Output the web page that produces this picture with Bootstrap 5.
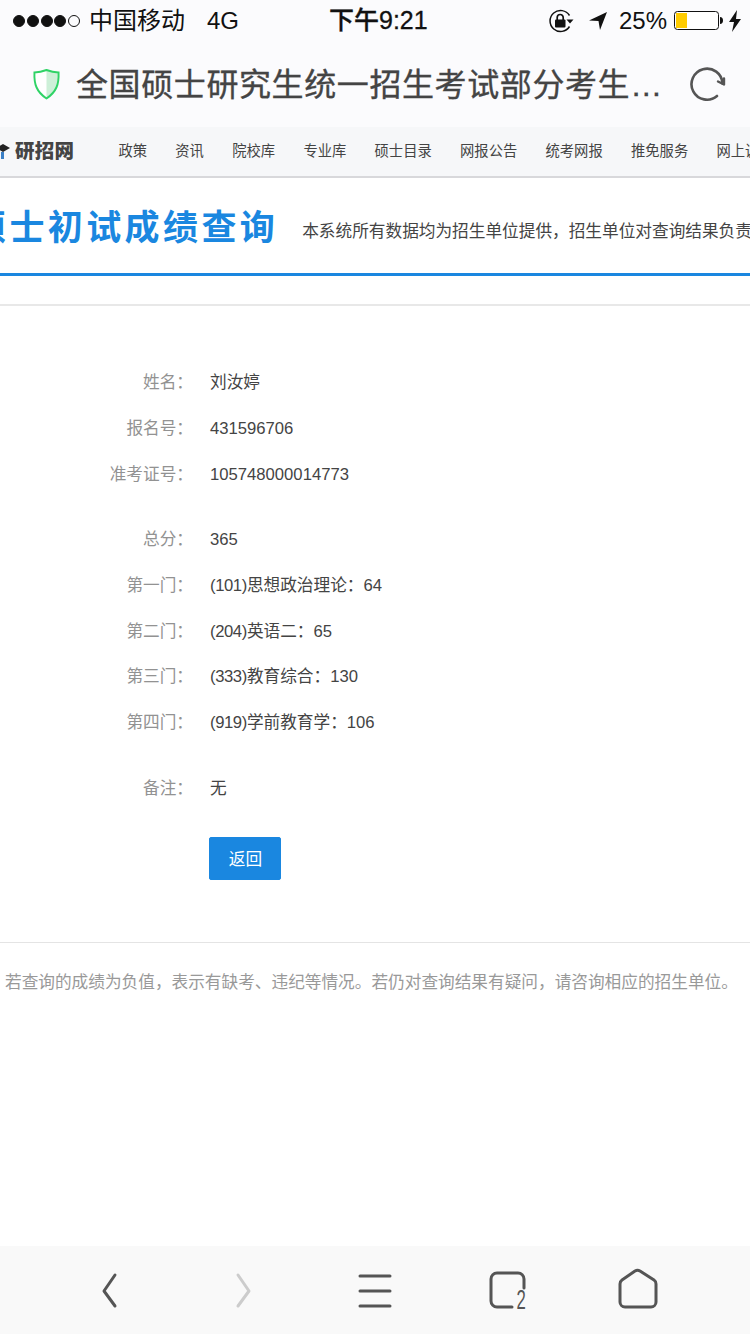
<!DOCTYPE html>
<html lang="zh-CN">
<head>
<meta charset="utf-8">
<title>硕士初试成绩查询</title>
<link href="https://cdn.jsdelivr.net/npm/bootstrap@5.3.0/dist/css/bootstrap.min.css" rel="stylesheet">
<style>
html,body{height:1334px;overflow:hidden;background:#fff}
body{font-family:"Liberation Sans","Noto Sans CJK SC",sans-serif;color:#333}
.shell{width:750px;height:1334px;overflow:hidden}
.chrome{height:127px;background:#fbfbfd;flex:none}
.statusline{height:40px;font-size:24px;line-height:36px;color:#111;padding:2px 8px 0 13px;white-space:nowrap}
.dots{gap:1.75px;margin-right:9px}
.dot{width:12px;height:12px;border-radius:50%;background:#111;border:1px solid #111}
.dot-empty{background:transparent}
.nettype{margin-left:22px}
.timetext{position:absolute;left:329px;top:2px;font-size:25px;font-weight:500;-webkit-text-stroke:.3px #111}
.gpsicon{margin-left:13px}
.pcttext{margin-left:11px}
.batt{margin-left:7px}
.urlline{height:87px;padding:0 23px 0 33px;gap:16px}
.urlline svg{flex-shrink:0}
.urltext{font-size:32px;letter-spacing:.6px;color:#444;white-space:nowrap;line-height:87px;padding-top:2px;width:600px;height:87px;overflow:hidden;-webkit-text-stroke:.35px #444}
.sitenav{height:51px;background:#f6f7f9;border-bottom:2px solid #d8d8db;white-space:nowrap;overflow:hidden;flex:none}
.sitenav > *{flex-shrink:0}
.brandname{font-weight:900;font-size:19.500px;color:#444;margin:0 44px 0 5px;line-height:1;letter-spacing:.3px}
.navitem{font-size:14.300px;color:#444;margin:1px 28.3px 0 0}
.headband{height:98px;padding-bottom:2px;border-bottom:3px solid #1a87e0;white-space:nowrap;overflow:hidden;flex:none}
.headtitle{font-size:35px;font-weight:700;color:#1a87e0;letter-spacing:3.4px;margin:0 24px 0 -29px;line-height:1;flex:none;font-family:"Noto Sans CJK SC",sans-serif}
.headnote{font-size:16.670px;color:#444;flex:none;margin-top:14px}
.rule-top{height:30px;border-bottom:2px solid #e8e8e8;flex:none}
.scoreblock{padding-top:54px;font-size:16.670px;flex:none}
.kv{height:45.67px;align-items:center}
.kv-gap{margin-top:20px}
.kv-label{width:193px;text-align:right;color:#929292;flex:none}
.kv-value{margin-left:17px;color:#444}
.subjcode{letter-spacing:-.4px}
.backbtn{margin:26px 0 0 209px;width:72px;height:43px;background:#1a87e0;border:1px solid #1a87e0;color:#fff;font-size:16.670px;border-radius:2px;padding:1px 0 0 1px;line-height:41px}
.noteblock{margin-top:62px;border-top:1px solid #e4e4e4;padding:28px 0 0 5px;font-size:16.670px;color:#999;line-height:24px;white-space:nowrap;flex:none}
.toolbar{height:88px;background:#f9f9f9;flex:none;position:relative}
.toolicon{position:absolute;top:0;left:0}
</style>
</head>
<body>
<div class="shell d-flex flex-column">
  <div class="chrome position-relative">
    <div class="statusline d-flex align-items-center">
      <span class="dots d-inline-flex"><i class="dot"></i><i class="dot"></i><i class="dot"></i><i class="dot"></i><i class="dot dot-empty"></i></span>
      <span>中国移动</span><span class="nettype">4G</span>
      <span class="timetext">下午9:21</span>
      <span class="ms-auto d-inline-flex align-items-center">
        <svg width="26" height="24" viewBox="0 0 26 24" fill="none"><path d="M20.5 6.500A10.500 10.500 0 1 0 20.500 17.500" stroke="#111" stroke-width="1.5"/><path d="M17.500 10.500h7l-3.500 4z" fill="#111"/><rect x="6" y="10.500" width="10.500" height="8" rx="1" fill="#111"/><path d="M8.200 11V8.500a3 3 0 0 1 6 0V11" stroke="#111" stroke-width="1.7"/></svg>
        <svg class="gpsicon" width="20" height="20" viewBox="0 0 20 20"><path d="M19 1 1 9.500 10.500 10 12 19z" fill="#111"/></svg>
        <span class="pcttext">25%</span>
        <svg class="batt" width="50" height="20" viewBox="0 0 50 20"><rect x=".5" y=".5" width="44" height="18" rx="3" fill="#fff" stroke="#111"/><rect x="2" y="2" width="11" height="15" fill="#fc0"/><path d="M46 6c2 0 3 1.500 3 3.500S48 13 46 13z" fill="#111"/></svg>
        <svg width="14" height="22" viewBox="0 0 14 22" class="ms-1"><path d="M9 0 1 12h5l-2 10 9-13H8z" fill="#111"/></svg>
      </span>
    </div>
    <div class="urlline d-flex align-items-center">
      <svg width="27" height="32" viewBox="0 0 28 32" fill="none"><path d="M14 1.500C19 3.500 22 4 26.500 4c.5 12-2 20-12.500 27C3.500 24 1 16 1.500 4 6 4 9 3.500 14 1.500z" fill="#fff"/><path d="M14 1.500C19 3.500 22 4 26.500 4c.5 12-2 20-12.500 27z" fill="#cdf0d8"/><path d="M14 1.500C19 3.500 22 4 26.500 4c.5 12-2 20-12.500 27C3.500 24 1 16 1.500 4 6 4 9 3.500 14 1.500z" stroke="#2fd366" stroke-width="2"/></svg>
      <div class="urltext">全国硕士研究生统一招生考试部分考生…</div>
      <svg class="ms-auto" width="38" height="38" viewBox="0 0 38 38" fill="none"><path d="M28 31A15.500 15.500 0 1 1 33.500 18.500" stroke="#555" stroke-width="2.600" stroke-linecap="round"/><path d="M29 16.500 35 19.500 35 13.500" stroke="#555" stroke-width="2.400" stroke-linecap="round" stroke-linejoin="round"/></svg>
    </div>
  </div>
  <nav class="sitenav d-flex align-items-center">
    <svg width="10" height="20" viewBox="0 0 10 20"><path d="M-4 6 3 2 10 6 3 10z" fill="#222"/><path d="M-2 9v6h2V9z" fill="#222"/><path d="M1 10v7h3v-7z" fill="#3a7fc5"/></svg>
    <span class="brandname">研招网</span>
    <span class="navitem">政策</span><span class="navitem">资讯</span><span class="navitem">院校库</span><span class="navitem">专业库</span><span class="navitem">硕士目录</span><span class="navitem">网报公告</span><span class="navitem">统考网报</span><span class="navitem">推免服务</span><span class="navitem">网上调剂</span>
  </nav>
  <header class="headband d-flex align-items-center">
    <span class="headtitle">硕士初试成绩查询</span>
    <span class="headnote">本系统所有数据均为招生单位提供，招生单位对查询结果负责</span>
  </header>
  <div class="rule-top"></div>
  <section class="scoreblock">
    <div class="kv d-flex"><span class="kv-label">姓名：</span><span class="kv-value">刘汝婷</span></div>
    <div class="kv d-flex"><span class="kv-label">报名号：</span><span class="kv-value">431596706</span></div>
    <div class="kv d-flex"><span class="kv-label">准考证号：</span><span class="kv-value">105748000014773</span></div>
    <div class="kv kv-gap d-flex"><span class="kv-label">总分：</span><span class="kv-value">365</span></div>
    <div class="kv d-flex"><span class="kv-label">第一门：</span><span class="kv-value"><span class="subjcode">(101)</span>思想政治理论：64</span></div>
    <div class="kv d-flex"><span class="kv-label">第二门：</span><span class="kv-value"><span class="subjcode">(204)</span>英语二：65</span></div>
    <div class="kv d-flex"><span class="kv-label">第三门：</span><span class="kv-value"><span class="subjcode">(333)</span>教育综合：130</span></div>
    <div class="kv d-flex"><span class="kv-label">第四门：</span><span class="kv-value"><span class="subjcode">(919)</span>学前教育学：106</span></div>
    <div class="kv kv-gap d-flex"><span class="kv-label">备注：</span><span class="kv-value">无</span></div>
    <button class="btn backbtn d-block" type="button">返回</button>
  </section>
  <div class="noteblock">若查询的成绩为负值，表示有缺考、违纪等情况。若仍对查询结果有疑问，请咨询相应的招生单位。</div>
  <div class="flex-grow-1"></div>
  <div class="toolbar">
    <svg class="toolicon" width="750" height="88" viewBox="0 0 750 88" fill="none" stroke="#555" stroke-width="3" stroke-linecap="round" stroke-linejoin="round">
      <path d="M115 29 104 45l11 15"/>
      <path d="M238 29l11 16-11 15" stroke="#ccc"/>
      <path d="M360 30h30M360 45h30M360 60h30"/>
      <path d="M512 61h-15a6 6 0 0 1-6-6V33a6 6 0 0 1 6-6h21a6 6 0 0 1 6 6v9"/>
      <path d="M620 38c0-2 .5-3 2-4l13-9c2-1.200 3-1.200 5 0l14 9c1.500 1 2 2 2 4v18a5 5 0 0 1-5 5h-26a5 5 0 0 1-5-5z"/>
      <text transform="translate(516.500 62.500) scale(.62 1)" font-family="Liberation Sans" font-size="27" fill="#555" stroke="none">2</text>
    </svg>
  </div>
</div>
</body>
</html>
